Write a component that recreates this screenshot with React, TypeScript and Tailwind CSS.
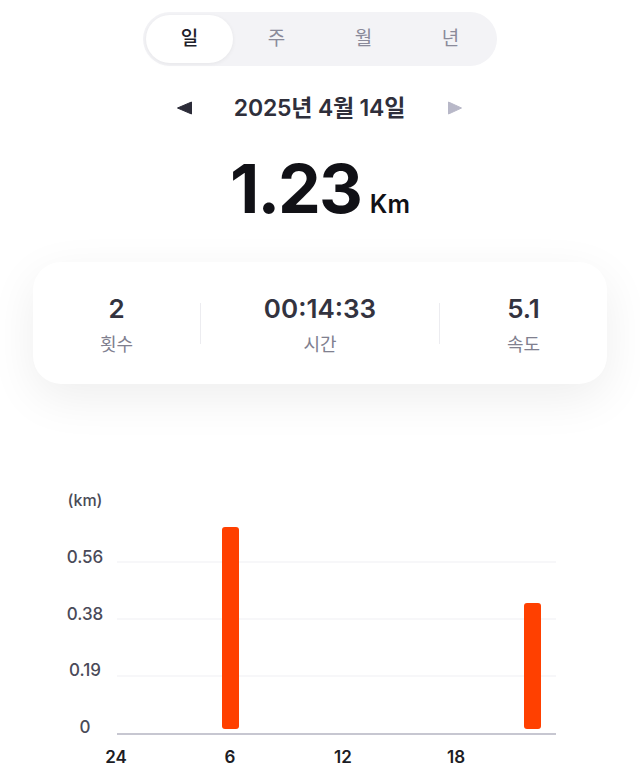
import React from "react";

const FONT = "font-['Inter','Noto_Sans_CJK_KR',sans-serif]";

function Segmented() {
  const items = ["일", "주", "월", "년"];
  return (
    <div className="mx-auto mt-[12px] flex h-[54px] w-[354px] items-center rounded-full bg-[#f3f3f6] p-[3px]">
      {items.map((t, i) => (
        <div
          key={t}
          className={
            "flex h-[48px] w-[88px] items-center justify-center rounded-full text-[19px] " +
            (i === 0
              ? "bg-white font-medium text-[#1e1e2a] shadow-[0_1px_4px_rgba(0,0,0,0.06)]"
              : "text-[#8a8a9a]")
          }
        >
          {t}
        </div>
      ))}
    </div>
  );
}

function DateRow() {
  return (
    <div className="mt-[26px] flex h-[32px] items-center justify-center">
      <svg width="15" height="14" viewBox="0 0 15 14" className="mr-[42px]">
        <polygon points="14.5,1 14.5,13 0.5,7" fill="#2c2c38" stroke="#2c2c38" strokeWidth="1" strokeLinejoin="round" />
      </svg>
      <div className="text-[23px] font-semibold leading-none tracking-[-0.2px] text-[#2f2f3b]">
        2025년 4월 14일
      </div>
      <svg width="15" height="14" viewBox="0 0 15 14" className="ml-[43px]">
        <polygon points="0.5,1 0.5,13 13.5,7" fill="#b8b8c8" stroke="#b8b8c8" strokeWidth="1" strokeLinejoin="round" />
      </svg>
    </div>
  );
}

function BigNumber() {
  return (
    <div className="mt-[30px] flex items-baseline justify-center leading-none">
      <span className="text-[68px] font-bold leading-none tracking-[-2px] text-[#111116]">
        1.23
      </span>
      <span className="ml-[9px] text-[25px] font-semibold leading-none text-[#111116]">
        Km
      </span>
    </div>
  );
}

function Stat({ value, label }: { value: string; label: string }) {
  return (
    <div className="flex flex-col items-center">
      <div className="text-[26px] font-semibold leading-none text-[#33333f]">{value}</div>
      <div className="mt-[14px] text-[18px] leading-none text-[#80808f]">{label}</div>
    </div>
  );
}

function Card() {
  return (
    <div className="mx-[33px] mt-[40px] flex h-[122px] items-center rounded-[28px] bg-white shadow-[0_14px_48px_rgba(0,0,0,0.07)]">
      <div className="flex w-[167px] justify-center pt-[4px]">
        <Stat value="2" label="횟수" />
      </div>
      <div className="h-[41px] w-px bg-[#ececf0]" />
      <div className="flex flex-1 justify-center pt-[4px]">
        <Stat value="00:14:33" label="시간" />
      </div>
      <div className="h-[41px] w-px bg-[#ececf0]" />
      <div className="flex w-[167px] justify-center pt-[4px]">
        <Stat value="5.1" label="속도" />
      </div>
    </div>
  );
}

function Chart() {
  const grid = [562, 619, 676];
  const yLabels = [
    { t: "0.56", y: 557 },
    { t: "0.38", y: 614 },
    { t: "0.19", y: 670 },
    { t: "0", y: 727 },
  ];
  const xLabels = [
    { t: "24", x: 116 },
    { t: "6", x: 230 },
    { t: "12", x: 343 },
    { t: "18", x: 456 },
  ];
  const bars = [
    { x: 222, top: 527 },
    { x: 524, top: 603 },
  ];
  return (
    <svg
      width="640"
      height="289"
      viewBox="0 480 640 289"
      className="mt-[96px] block"
    >
      <text
        x="85"
        y="500"
        textAnchor="middle"
        dominantBaseline="central"
        fontSize="16"
        fontWeight="500"
        fill="#4a4a56"
      >
        (km)
      </text>
      {yLabels.map((l) => (
        <text
          key={l.t}
          x="85"
          y={l.y}
          textAnchor="middle"
          dominantBaseline="central"
          fontSize="17"
          fontWeight="500"
          fill="#4a4a58"
        >
          {l.t}
        </text>
      ))}
      {grid.map((y) => (
        <line key={y} x1="117" x2="556" y1={y} y2={y} stroke="#efeff3" strokeWidth="1" />
      ))}
      <line x1="117" x2="556" y1="734" y2="734" stroke="#b4b4c2" strokeWidth="1.5" />
      {bars.map((b) => (
        <rect
          key={b.x}
          x={b.x}
          y={b.top}
          width="17"
          height={729 - b.top}
          rx="3"
          fill="#ff4000"
        />
      ))}
      {xLabels.map((l) => (
        <text
          key={l.t}
          x={l.x}
          y="757"
          textAnchor="middle"
          dominantBaseline="central"
          fontSize="17"
          fontWeight="600"
          fill="#1c1c24"
        >
          {l.t}
        </text>
      ))}
    </svg>
  );
}

export default function App() {
  return (
    <div className={"flex h-[769px] w-[640px] flex-col overflow-hidden bg-white " + FONT}>
      <Segmented />
      <DateRow />
      <BigNumber />
      <Card />
      <Chart />
    </div>
  );
}
